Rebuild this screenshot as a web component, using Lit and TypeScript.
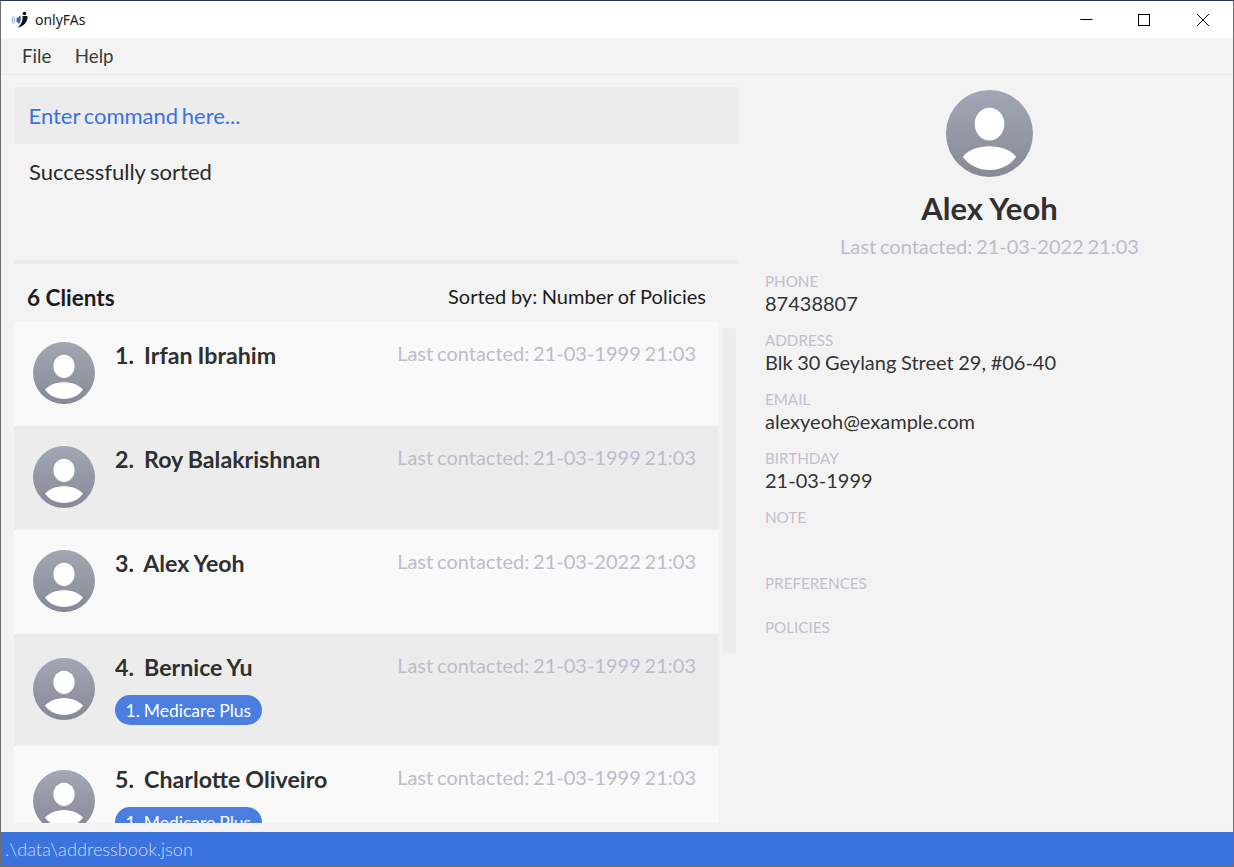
import { LitElement, html, css, svg } from "lit";
import { customElement } from "lit/decorators.js";

const avatar = (size: number, id: string) => html`<svg class="avatar" width=${size} height=${size} viewBox="0 0 88 88">
  <defs><linearGradient id=${id} x1="0" y1="0" x2="0" y2="1"><stop offset="0" stop-color="#a2a7b5"/><stop offset="1" stop-color="#868a96"/></linearGradient></defs>
  <circle cx="44" cy="44" r="44" fill="url(#${id})"/>
  <ellipse cx="44" cy="34.500" rx="15" ry="16.500" fill="#fff"/>
  ${svg`<path d="M17 67.500C23 60.500 33 57 44 57s21 3.500 27 10.500C65 76 55 81 44 81s-21-5-27-13.500z" fill="#fff"/>`}
</svg>`;

const clients = [
  { n: "1.", name: "Irfan Ibrahim", date: "21-03-1999 21:03", tag: "" },
  { n: "2.", name: "Roy Balakrishnan", date: "21-03-1999 21:03", tag: "" },
  { n: "3.", name: "Alex Yeoh", date: "21-03-2022 21:03", tag: "" },
  { n: "4.", name: "Bernice Yu", date: "21-03-1999 21:03", tag: "1. Medicare Plus" },
  { n: "5.", name: "Charlotte Oliveiro", date: "21-03-1999 21:03", tag: "1. Medicare Plus" },
];

const details = [
  ["PHONE", "87438807"],
  ["ADDRESS", "Blk 30 Geylang Street 29, #06-40"],
  ["EMAIL", "alexyeoh@example.com"],
  ["BIRTHDAY", "21-03-1999"],
];

@customElement("app-root")
export class AppRoot extends LitElement {
  static styles = css`
    :host { display: block; width: 1234px; height: 867px; font-family: Lato, sans-serif; }
    * { box-sizing: border-box; }
    .window { width: 1234px; height: 867px; display: flex; flex-direction: column; background: #f3f3f3;
      border: 1px solid #6e6e6e; border-top-color: #2b3358; overflow: hidden; }
    .title { height: 37px; flex: none; background: #fff; display: flex; align-items: center; padding-right: 1px; }
    .logo { margin-left: 10px; margin-right: 6px; }
    .app-name { font-size: 14px; color: #1a1a1a; font-family: "Noto Sans", sans-serif; flex: 1; }
    .win-btn { width: 58.500px; height: 37px; display: flex; align-items: center; justify-content: center; }
    .menu { height: 37px; flex: none; display: flex; align-items: center; padding-left: 21px; gap: 23.500px; font-size: 18.700px; color: #3a3a3a;
      border-bottom: 1px solid #e9e9e9; }
    .main { flex: 1; display: flex; min-height: 0; }
    .left { width: 738px; flex: none; padding: 12px 0 9px 13px; display: flex; flex-direction: column; min-height: 0; }
    .cmd { height: 57px; flex: none; background: #ececec; border-radius: 3px; display: flex; align-items: center; padding-left: 14.500px;
      font-size: 22px; word-spacing: -2px; color: #3a72e6; }
    .result { height: 120px; flex: none; padding: 14px 0 0 15px; font-size: 22px; word-spacing: -1px; line-height: 28px; color: #2b2b2b;
      border-bottom: 4px solid #ececec; }
    .head { height: 58px; flex: none; display: flex; justify-content: space-between; align-items: center; padding: 9px 33px 0 13px; color: #1c1c1c; }
    .count { font-size: 22.500px; font-weight: 700; }
    .sorted { font-size: 20px; word-spacing: -0.500px; position: relative; top: -2px; }
    .list-wrap { flex: 1; min-height: 0; display: flex; }
    .list { width: 705px; flex: none; overflow: hidden; background: #f9f9f9; height: 501px; }
    .row { display: flex; height: 104px; background: #f9f9f9; padding: 0 23px 0 19px; align-items: flex-start; }
    .row.even { background: #ececec; }
    .row.tall { height: 112px; }
    .avatar { flex: none; display: block; }
    .row .avatar { margin-top: 20px; }
    .row.tall .avatar { margin-top: 24px; }
    .info { margin-left: 20px; flex: 1; padding-top: 17px; }
    .top { display: flex; justify-content: space-between; align-items: flex-start; }
    .name { font-size: 23.200px; word-spacing: -0.600px; font-weight: 700; color: #303030; line-height: 32px; white-space: pre; }
    .last { font-size: 20px; word-spacing: -1.300px; color: #bcbccb; line-height: 28px; }
    .tag { display: inline-block; margin-top: 12px; height: 30px; line-height: 31px; padding: 0 10.500px; border-radius: 15px;
      background: #4a7ee0; color: #fff; font-size: 17.500px; word-spacing: -0.500px; }
    .bar { width: 13px; margin: 6px 0 0 4px; height: 325px; background: #ececec; border-radius: 3px; flex: none; }
    .right { flex: 1; padding: 15px 0 0 26px; min-width: 0; }
    .profile { display: flex; flex-direction: column; align-items: center; width: 449px; }
    .big-name { font-size: 31px; font-weight: 700; color: #303030; line-height: 38px; margin-top: 12px; }
    .big-last { font-size: 20px; word-spacing: -1.300px; color: #bcbccb; line-height: 26px; margin-top: 6px; }
    .fields { margin-top: 13px; }
    .label { font-size: 15.200px; color: #c0c0d0; line-height: 19px; }
    .value { font-size: 20px; word-spacing: -0.500px; color: #333; line-height: 24px; margin-bottom: 16px; height: 24px; }
    .label.pref { margin-top: 47px; }
    .label.pol { margin-top: 25px; }
    .status { height: 34px; flex: none; background: #3a72de; color: #cfdcf5; font-size: 18.200px; display: flex; align-items: center; padding-left: 4px; font-weight: 300; }
  `;

  render() {
    return html`<div class="window">
      <div class="title">
        <svg class="logo" width="18" height="18" viewBox="0 0 18 18">
          <circle cx="13.500" cy="2.500" r="1.800" fill="#111"/>
          <path d="M11.500 5h5c.3 5.500-3 10.500-10 11.500 3.500-2.500 5.500-6.500 5-11.500z" fill="#111"/>
          <path d="M9.500 4.500c.8 2.800.3 5.800-1.500 8.500L5.500 10.500V7.500z" fill="#3f68ad"/>
          <path d="M4 6.500C3 8 3 10 4 11.500M2.300 5.500C1 7.500 1 10.500 2.300 12.500" stroke="#7f9ccc" stroke-width="1" fill="none"/>
        </svg>
        <span class="app-name">onlyFAs</span>
        <div class="win-btn"><svg width="14" height="14" viewBox="0 0 14 14"><path d="M1.500 6.500h12" stroke="#000" fill="none"/></svg></div>
        <div class="win-btn"><svg width="14" height="14" viewBox="0 0 14 14"><rect x="1.500" y="1.500" width="11" height="11" stroke="#000" fill="none"/></svg></div>
        <div class="win-btn"><svg width="14" height="14" viewBox="0 0 14 14"><path d="M1 1l12 12M13 1L1 13" stroke="#000" fill="none"/></svg></div>
      </div>
      <div class="menu"><span>File</span><span>Help</span></div>
      <div class="main">
        <div class="left">
          <div class="cmd">Enter command here...</div>
          <div class="result">Successfully sorted</div>
          <div class="head"><span class="count">6 Clients</span><span class="sorted">Sorted by: Number of Policies</span></div>
          <div class="list-wrap">
            <div class="list">
              ${clients.map((c, i) => html`<div class="row ${i % 2 ? "even" : ""} ${c.tag ? "tall" : ""}">
                ${avatar(62, "g" + i)}
                <div class="info">
                  <div class="top">
                    <span class="name">${c.n}  ${c.name}</span>
                    <span class="last">Last contacted: ${c.date}</span>
                  </div>
                  ${c.tag ? html`<span class="tag">${c.tag}</span>` : ""}
                </div>
              </div>`)}
            </div>
            <div class="bar"></div>
          </div>
        </div>
        <div class="right">
          <div class="profile">
            ${avatar(87, "gp")}
            <div class="big-name">Alex Yeoh</div>
            <div class="big-last">Last contacted: 21-03-2022 21:03</div>
          </div>
          <div class="fields">
            ${details.map(([l, v]) => html`<div class="label">${l}</div><div class="value">${v}</div>`)}
            <div class="label">NOTE</div>
            <div class="label pref">PREFERENCES</div>
            <div class="label pol">POLICIES</div>
          </div>
        </div>
      </div>
      <div class="status">.\\data\\addressbook.json</div>
    </div>`;
  }
}
